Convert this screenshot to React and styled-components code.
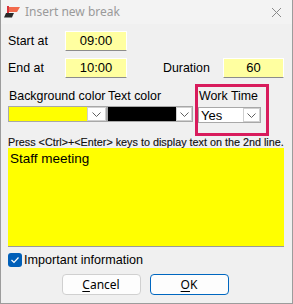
import React from 'react'
import styled, { createGlobalStyle } from 'styled-components'

const GlobalStyle = createGlobalStyle`
  html, body {
    margin: 0;
    padding: 0;
    background: #ffffff;
  }
  * {
    box-sizing: border-box;
  }
`

const Window = styled.div`
  width: 293px;
  height: 304px;
  background: #f0f0f0;
  border: 1px solid #9c9c9c;
  border-top: none;
  display: flex;
  flex-direction: column;
  font-family: "Liberation Sans", Arial, sans-serif;
  font-size: 12.4px;
  color: #000;
  overflow: hidden;
`

const TitleBar = styled.div`
  height: 24px;
  background: #f3f3f3;
  display: flex;
  align-items: center;
  padding: 0 10px 0 2px;
  gap: 4px;
  flex-shrink: 0;
`

const Title = styled.div`
  flex: 1;
  font-family: "Noto Sans", "Open Sans", sans-serif;
  font-size: 12px;
  color: #9a9a9a;
  margin-top: -1px;
`

const Body = styled.div`
  flex: 1;
  display: flex;
  flex-direction: column;
  padding: 6px 8px 0 6px;
`

const FieldRow = styled.div`
  display: flex;
  align-items: center;
  height: 21px;
  margin-bottom: ${p => p.$gap || 0}px;
`

const Label = styled.div`
  width: ${p => p.$w}px;
  margin-left: ${p => p.$ml || 0}px;
  padding-left: 1px;
  flex-shrink: 0;
`

const TimeInput = styled.div`
  width: ${p => p.$w || 62}px;
  height: 20px;
  background: #ffffa0;
  border-top: 1px solid #ffffff;
  border-left: 1px solid #ffffff;
  border-right: 1px solid #ffffff;
  border-bottom: 1px solid #8c8c8c;
  display: flex;
  align-items: center;
  justify-content: center;
  font-size: 13px;
`

const ColorRow = styled.div`
  display: flex;
  align-items: flex-start;
  margin-top: 6px;
`

const ColorGroup = styled.div`
  display: flex;
  flex-direction: column;
  width: ${p => p.$w}px;
  margin-left: ${p => p.$ml || 0}px;
  padding-top: 4px;
`

const GroupLabel = styled.div`
  line-height: 16px;
  padding-left: 1px;
  margin-bottom: 2px;
  white-space: nowrap;
`

const WorkBox = styled.div`
  width: 74px;
  margin-left: 2px;
  border: 3px solid #d81b5c;
  padding: 1px 5px 10px 0;
  display: flex;
  flex-direction: column;
`

const Dropdown = styled.div`
  height: 16px;
  display: flex;
  border: 1px solid #a8a8a8;
  background: #ffffff;
  margin-top: ${p => p.$mt || 0}px;
`

const Swatch = styled.div`
  flex: 1;
  background: ${p => p.$color};
  display: flex;
  align-items: center;
  padding-left: 2px;
  font-size: 13px;
`

const ArrowButton = styled.div`
  width: ${p => p.$w || 18}px;
  background: #ffffff;
  border: 1px solid #d0d0d0;
  display: flex;
  align-items: center;
  justify-content: center;
`

const Hint = styled.div`
  font-size: 10.8px;
  line-height: 12px;
  height: 12px;
  white-space: nowrap;
  padding-left: 1px;
  color: #111;
  -webkit-text-stroke: 0.15px #111;
`

const TextArea = styled.div`
  height: 99px;
  margin-left: 1px;
  background: #ffff00;
  border-bottom: 1px solid #9a9a9a;
  padding: 3px 2px;
  font-size: 13.5px;
`

const CheckRow = styled.div`
  display: flex;
  align-items: center;
  gap: 2px;
  margin-top: 5px;
  height: 16px;
  font-size: 12.6px;
`

const CheckBox = styled.div`
  width: 14px;
  height: 14px;
  border-radius: 3px;
  background: #005fb8;
  margin-left: 1px;
  display: flex;
  align-items: center;
  justify-content: center;
`

const Buttons = styled.div`
  display: flex;
  justify-content: center;
  gap: 9px;
  margin-top: 6px;
  padding-right: 1px;
`

const Button = styled.div`
  width: 79px;
  height: 21px;
  border-radius: 4px;
  background: #fdfdfd;
  border: 1px solid ${p => (p.$primary ? '#0067c0' : '#d0d0d0')};
  display: flex;
  align-items: center;
  justify-content: center;
  font-family: "Noto Sans", "Open Sans", sans-serif;
  font-size: 12px;

  u {
    text-decoration-thickness: 1px;
    text-underline-offset: 2px;
  }
`

const Chevron = () => (
  <svg width="9" height="5" viewBox="0 0 9 5">
    <path d="M0.5 0.5 L4.5 4.5 L8.5 0.5" fill="none" stroke="#606060" strokeWidth="1" />
  </svg>
)

// red flag with a dark swoosh under it
const AppIcon = () => (
  <svg width="18" height="13" viewBox="0 0 18 13">
    <rect x="4" y="0" width="2" height="7" fill="#d8343c" />
    <path d="M6 1 L17 1 L15.5 3.5 L14 6 L6 6 Z" fill="#f26a4b" />
    <path d="M3 7 L11 7 L10 9 L9 11.5 L1 11.5 Z" fill="#2a2a2a" />
  </svg>
)

const CloseIcon = () => (
  <svg width="11" height="11" viewBox="0 0 11 11">
    <path d="M1 1 L10 10 M10 1 L1 10" stroke="#8a8a8a" strokeWidth="1" />
  </svg>
)

const Check = () => (
  <svg width="10" height="8" viewBox="0 0 10 8">
    <path d="M1.5 4 L4 6.5 L8.5 1.5" fill="none" stroke="#ffffff" strokeWidth="1.2" />
  </svg>
)

const App = () => {
  return (
    <>
      <GlobalStyle />
      <Window>
        <TitleBar>
          <AppIcon />
          <Title>Insert new break</Title>
          <CloseIcon />
        </TitleBar>
        <Body>
          <FieldRow $gap={6}>
            <Label $w={58}>Start at</Label>
            <TimeInput>09:00</TimeInput>
          </FieldRow>
          <FieldRow>
            <Label $w={58}>End at</Label>
            <TimeInput>10:00</TimeInput>
            <Label $w={61} $ml={35}>Duration</Label>
            <TimeInput $w={61}>60</TimeInput>
          </FieldRow>

          <ColorRow>
            <ColorGroup $w={99} $ml={1}>
              <GroupLabel>Background color</GroupLabel>
              <Dropdown>
                <Swatch $color="#ffff00" />
                <ArrowButton $w={19}><Chevron /></ArrowButton>
              </Dropdown>
            </ColorGroup>
            <ColorGroup $w={86}>
              <GroupLabel>Text color</GroupLabel>
              <Dropdown>
                <Swatch $color="#000000" />
                <ArrowButton $w={16}><Chevron /></ArrowButton>
              </Dropdown>
            </ColorGroup>
            <WorkBox>
              <GroupLabel>Work Time</GroupLabel>
              <Dropdown $mt={1}>
                <Swatch $color="#ffffff">Yes</Swatch>
                <ArrowButton $w={17}><Chevron /></ArrowButton>
              </Dropdown>
            </WorkBox>
          </ColorRow>

          <Hint>Press &lt;Ctrl&gt;+&lt;Enter&gt; keys to display text on the 2nd line.</Hint>
          <TextArea>Staff meeting</TextArea>

          <CheckRow>
            <CheckBox><Check /></CheckBox>
            <span>Important information</span>
          </CheckRow>

          <Buttons>
            <Button><span><u>C</u>ancel</span></Button>
            <Button $primary><span><u>O</u>K</span></Button>
          </Buttons>
        </Body>
      </Window>
    </>
  )
}

export default App
